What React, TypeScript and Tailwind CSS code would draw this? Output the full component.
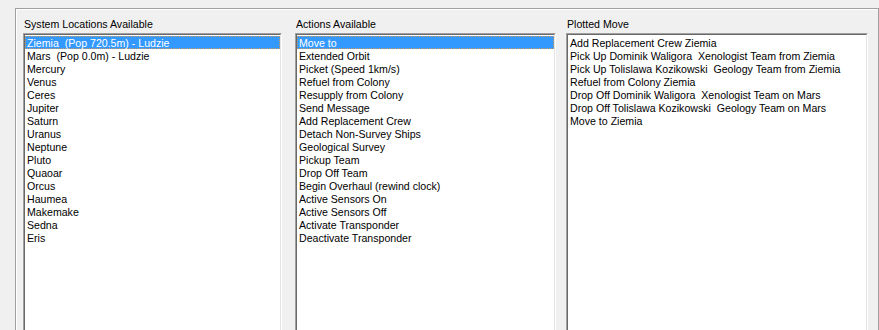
import React from 'react';

const locations = [
  'Ziemia  (Pop 720.5m) - Ludzie',
  'Mars  (Pop 0.0m) - Ludzie',
  'Mercury',
  'Venus',
  'Ceres',
  'Jupiter',
  'Saturn',
  'Uranus',
  'Neptune',
  'Pluto',
  'Quaoar',
  'Orcus',
  'Haumea',
  'Makemake',
  'Sedna',
  'Eris',
];

const actions = [
  'Move to',
  'Extended Orbit',
  'Picket (Speed 1km/s)',
  'Refuel from Colony',
  'Resupply from Colony',
  'Send Message',
  'Add Replacement Crew',
  'Detach Non-Survey Ships',
  'Geological Survey',
  'Pickup Team',
  'Drop Off Team',
  'Begin Overhaul (rewind clock)',
  'Active Sensors On',
  'Active Sensors Off',
  'Activate Transponder',
  'Deactivate Transponder',
];

const plotted = [
  'Add Replacement Crew Ziemia',
  'Pick Up Dominik Waligora  Xenologist Team from Ziemia',
  'Pick Up Tolislawa Kozikowski  Geology Team from Ziemia',
  'Refuel from Colony Ziemia',
  'Drop Off Dominik Waligora  Xenologist Team on Mars',
  'Drop Off Tolislawa Kozikowski  Geology Team on Mars',
  'Move to Ziemia',
];

interface ListPanelProps {
  label: string;
  items: string[];
  selected?: number;
  width: string;
}

const ListPanel: React.FC<ListPanelProps> = ({ label, items, selected, width }) => (
  <div className={`flex flex-col ${width}`}>
    <div className="mt-px h-[13px] leading-[13px] pl-px text-black">{label}</div>
    {/* sunken 3D listbox */}
    <div className="mt-[2px] h-[320px] border border-t-[#a0a0a0] border-l-[#a0a0a0] border-r-white border-b-white">
      <div className="h-full border border-t-[#696969] border-l-[#696969] border-r-[#e3e3e3] border-b-[#e3e3e3] bg-white pt-px">
        {items.map((item, i) => (
          <div
            key={item}
            className={`h-[13px] leading-[12px] whitespace-pre pl-px ${
              i === selected
                ? 'bg-[#3399ff] text-white border border-dotted border-[#cc9966]'
                : 'border border-transparent text-black'
            }`}
          >
            {item}
          </div>
        ))}
      </div>
    </div>
  </div>
);

export default function App() {
  return (
    <div
      className="h-[330px] w-[879px] overflow-hidden bg-[#f0f0f0] pt-2 pl-[15px] text-[10.6px]"
      style={{ fontFamily: '"Liberation Sans", Arial, sans-serif' }}
    >
      {/* group box */}
      <div className="h-[340px] border border-[#a0a0a0] shadow-[inset_1px_1px_0_#ffffff] pl-[7px] pt-[8px]">
        <div className="flex">
          <ListPanel label="System Locations Available" items={locations} selected={0} width="w-[259px]" />
          <div className="w-[13px]" />
          <ListPanel label="Actions Available" items={actions} selected={0} width="w-[261px]" />
          <div className="w-[10px]" />
          <ListPanel label="Plotted Move" items={plotted} width="w-[302px]" />
        </div>
      </div>
    </div>
  );
}
